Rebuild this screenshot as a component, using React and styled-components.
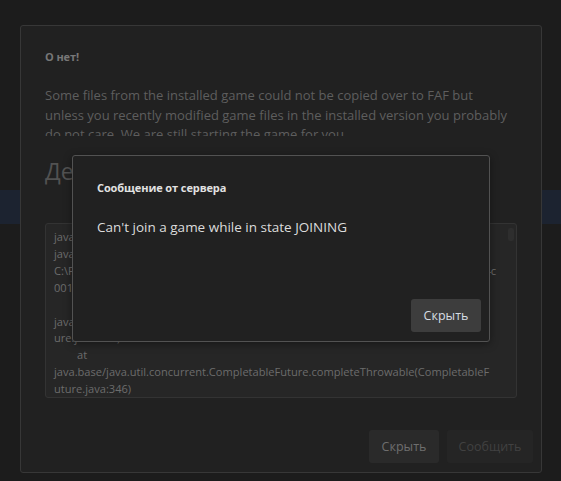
import React from "react";
import styled, { createGlobalStyle } from "styled-components";

const GlobalStyle = createGlobalStyle`
  html, body {
    margin: 0;
    padding: 0;
    background: #1c1c1c;
    font-family: "Open Sans", "Noto Sans", sans-serif;
  }
`;

const Page = styled.div`
  position: relative;
  width: 561px;
  height: 481px;
  overflow: hidden;
  background: #1c1c1c;
`;

const Band = styled.div`
  margin-top: 190px;
  height: 34px;
  background: #1c2330;
`;

const Dialog = styled.section`
  position: absolute;
  left: 20px;
  top: 25px;
  width: 522px;
  height: 448px;
  box-sizing: border-box;
  display: flex;
  flex-direction: column;
  background: #212121;
  border: 1px solid #373737;
  border-radius: 3px;
`;

const DialogBody = styled.div`
  padding: 22px 24px 0 24px;
  display: flex;
  flex-direction: column;
`;

const Title = styled.h3`
  margin: 0;
  font-size: 11px;
  line-height: 18px;
  font-weight: 700;
  letter-spacing: -0.1px;
  color: ${(p) => p.$color || "#777777"};
`;

const Message = styled.p`
  margin: 20px 0 0;
  height: 50px;
  overflow: hidden;
  font-size: 13px;
  line-height: 19.5px;
  color: #5e5e5e;
  white-space: nowrap;
`;

const Heading = styled.h2`
  margin: 19px 0 0;
  font-size: 23px;
  line-height: 32px;
  font-weight: 400;
  color: #525252;
`;

const Trace = styled.pre`
  margin: 36px 0 0;
  height: 175px;
  box-sizing: border-box;
  padding: 5px 8px;
  background: #262626;
  border: 1px solid #333333;
  border-radius: 3px;
  font-family: "Open Sans", "Noto Sans", sans-serif;
  font-size: 11.1px;
  line-height: 16.9px;
  color: #6c6c6c;
  white-space: pre;
  tab-size: 8;
  overflow: hidden;
  position: relative;
`;

const Thumb = styled.span`
  position: absolute;
  right: 2px;
  top: 4px;
  width: 6px;
  height: 13px;
  background: #2e2e2e;
  border-radius: 2px;
`;

const Footer = styled.div`
  margin-top: auto;
  padding: 0 8px 9px 0;
  display: flex;
  justify-content: flex-end;
  gap: 8px;
`;

const Button = styled.button`
  height: 33px;
  min-width: ${(p) => p.$w}px;
  padding: 0 10px;
  border: none;
  border-radius: 3px;
  font-family: "Open Sans", "Noto Sans", sans-serif;
  font-size: 12.5px;
  background: ${(p) => p.$bg};
  color: ${(p) => p.$fg};
  cursor: pointer;
`;

const Popup = styled.section`
  position: absolute;
  left: 72px;
  top: 155px;
  width: 418px;
  height: 187px;
  box-sizing: border-box;
  display: flex;
  flex-direction: column;
  background: #212121;
  border: 1px solid #525252;
  border-radius: 3px;
  box-shadow: 0 2px 8px rgba(0, 0, 0, 0.4);
`;

const PopupBody = styled.div`
  padding: 23px 24px 0;
`;

const PopupText = styled.p`
  margin: 20px 0 0;
  font-size: 13.5px;
  line-height: 20px;
  color: #dcdcdc;
`;

const traceLines = [
  "java.util.concurrent.CompletionException: java.lang.IllegalStateException: File",
  "java.nio.file.AccessDeniedException: Could not copy file from install dir",
  "C:\\ProgramData\\FAForever\\bin\\gamedata\\lua.nx2 -> C:\\Games\\FAF\\cache\\7f1e2c9a4c",
  "001 (The process cannot access the file because it is being used)",
  "",
  "java.base/java.util.concurrent.CompletableFuture.encodeThrowable(CompletableFut",
  "ure.java:314)",
  "\tat",
  "java.base/java.util.concurrent.CompletableFuture.completeThrowable(CompletableF",
  "uture.java:346)",
];

export default function App() {
  return (
    <Page>
      <GlobalStyle />
      <Band />
      <Dialog>
        <DialogBody>
          <Title>О нет!</Title>
          <Message>
            Some files from the installed game could not be copied over to FAF but
            <br />
            unless you recently modified game files in the installed version you probably
            <br />
            do not care. We are still starting the game for you.
          </Message>
          <Heading>Детали</Heading>
          <Trace>
            <Thumb />
            {traceLines.join("\n")}
          </Trace>
        </DialogBody>
        <Footer>
          <Button $w={70} $bg="#2a2a2a" $fg="#6e6e6e">Скрыть</Button>
          <Button $w={86} $bg="#252525" $fg="#414141">Сообщить</Button>
        </Footer>
      </Dialog>
      <Popup>
        <PopupBody>
          <Title $color="#e2e2e2">Сообщение от сервера</Title>
          <PopupText>Can't join a game while in state JOINING</PopupText>
        </PopupBody>
        <Footer>
          <Button $w={70} $bg="#3d3d3d" $fg="#d6dce2">Скрыть</Button>
        </Footer>
      </Popup>
    </Page>
  );
}
